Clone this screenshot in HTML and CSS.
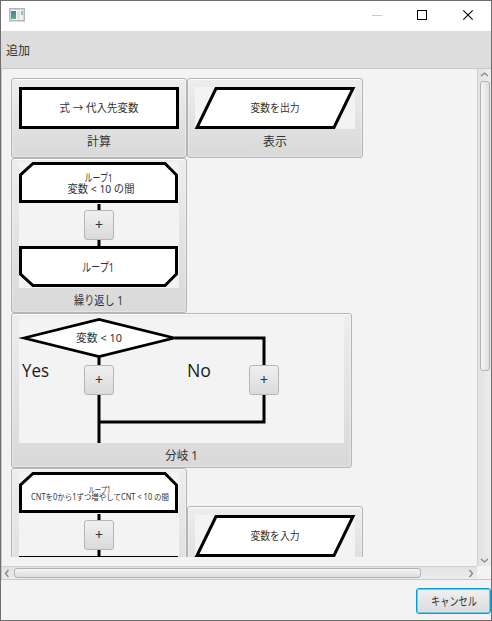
FILE: index.html
```html
<!DOCTYPE html>
<html lang="ja">
<head>
<meta charset="utf-8">
<title>追加</title>
<link rel="stylesheet" href="styles.css">
</head>
<body>
<div class="window">
  <div class="titlebar">
    <svg class="app-icon" width="16" height="14" viewBox="0 0 16 14">
      <defs><linearGradient id="pane" x1="0" y1="0" x2="0" y2="1"><stop offset="0" stop-color="#4b7fa5"/><stop offset="1" stop-color="#55ae7c"/></linearGradient></defs>
      <rect x=".75" y=".75" width="14.5" height="12" fill="#f3f4f5" stroke="#b2b5b9" stroke-width="1.5"/>
      <path d="M1 1.5H15" stroke="#c9d1d8"/>
      <rect x="2" y="3" width="5" height="8" fill="url(#pane)"/>
      <rect x="8" y="3" width="3" height="8" fill="#dfe2e5"/>
      <rect x="12" y="3" width="2" height="4" fill="#91c4b4"/>
    </svg>
    <svg class="controls" width="102" height="12" viewBox="0 0 102 12">
      <path d="M0 6.5H10" stroke="#ccc"/>
      <rect x="45.5" y="1.5" width="9" height="9" fill="none" stroke="#000"/>
      <path d="M91.3 1.3L100.7 10.7M100.7 1.3L91.3 10.7" stroke="#000" stroke-width="1.1"/>
    </svg>
  </div>
  <div class="header">追加</div>
  <div class="scroll-pane">
    <div class="viewport">
      <div class="row">
        <div class="tile simple">
          <svg width="160" height="42">
            <rect x="1.5" y="1.5" width="157" height="39" class="shape"/>
            <text x="80" y="25" textLength="79" lengthAdjust="spacingAndGlyphs" class="t11">式 → 代入先変数</text>
          </svg>
          <div class="label">計算</div>
        </div>
        <div class="tile simple">
          <svg class="canvas" width="160" height="42">
            <path d="M21 1.5H158L139 40.5H2Z" class="shape"/>
            <text x="80" y="25" textLength="49" lengthAdjust="spacingAndGlyphs" class="t11">変数を出力</text>
          </svg>
          <div class="label">表示</div>
        </div>
      </div>
      <div class="row">
        <div class="tile block">
          <div class="diagram">
            <svg class="canvas" width="160" height="126">
              <path d="M80 42V86" class="line"/>
              <path d="M14 1.5H146L157.5 13V39.5H1.5V13Z" class="shape"/>
              <path d="M1.5 85.5H157.5V112L146 123.5H14L1.5 112Z" class="shape"/>
              <text x="79.5" y="20" textLength="28" lengthAdjust="spacingAndGlyphs" class="t11">ループ1</text>
              <text x="82" y="31" textLength="67" lengthAdjust="spacingAndGlyphs" class="t11">変数 &lt; 10 の間</text>
              <text x="79" y="110" textLength="32" lengthAdjust="spacingAndGlyphs" class="t12">ループ1</text>
            </svg>
            <span class="plus plus-left">+</span>
          </div>
          <div class="label wide"><svg width="52" height="24"><text x="25.5" y="17" textLength="49" lengthAdjust="spacingAndGlyphs" class="t12">繰り返し 1</text></svg></div>
        </div>
      </div>
      <div class="row">
        <div class="tile block">
          <div class="diagram">
            <svg class="canvas" width="325" height="126">
              <path d="M156 21H245V105H80M80 40V126" class="line"/>
              <path d="M5 21L80 2.5L155 21L80 39.5Z" class="shape diamond"/>
              <text x="80" y="25" textLength="46" lengthAdjust="spacingAndGlyphs" class="t11">変数 &lt; 10</text>
              <text x="16.5" y="60" textLength="27" lengthAdjust="spacingAndGlyphs" class="branch">Yes</text>
              <text x="180" y="60" textLength="24" lengthAdjust="spacingAndGlyphs" class="branch">No</text>
            </svg>
            <span class="plus plus-left">+</span>
            <span class="plus plus-right">+</span>
          </div>
          <div class="label wide"><svg width="36" height="24"><text x="17.5" y="17" textLength="33" lengthAdjust="spacingAndGlyphs" class="t12">分岐 1</text></svg></div>
        </div>
      </div>
      <div class="row">
        <div class="tile block">
          <div class="diagram">
            <svg class="canvas" width="160" height="126">
              <path d="M80 42V86" class="line"/>
              <path d="M14 1.5H146L157.5 13V39.5H1.5V13Z" class="shape"/>
              <path d="M1.5 85.5H157.5V112L146 123.5H14L1.5 112Z" class="shape"/>
              <text x="80.5" y="21" textLength="22" lengthAdjust="spacingAndGlyphs" class="t8">ループ1</text>
              <text x="81" y="28" textLength="138" lengthAdjust="spacingAndGlyphs" class="t8">CNTを0から1ずつ増やしてCNT &lt; 10 の間</text>
            </svg>
            <span class="plus plus-left">+</span>
          </div>
        </div>
        <div class="tile simple lowered">
          <svg class="canvas" width="160" height="42">
            <path d="M21 1.5H158L139 40.5H2Z" class="shape"/>
            <text x="80" y="25" textLength="49" lengthAdjust="spacingAndGlyphs" class="t11">変数を入力</text>
          </svg>
        </div>
      </div>
    </div>
    <div class="vbar">
      <svg width="9" height="11" viewBox="0 0 9 11"><path d="M1 7L4.5 4L8 7" class="arrow"/></svg>
      <div class="vthumb"></div>
      <svg class="end" width="9" height="11" viewBox="0 0 9 11"><path d="M1 4L4.5 7L8 4" class="arrow"/></svg>
    </div>
    <div class="hbar">
      <svg width="11" height="11" viewBox="0 0 11 11"><path d="M6.5 2L3.5 5.5L6.5 9" class="arrow"/></svg>
      <div class="hthumb"></div>
      <svg class="end" width="11" height="11" viewBox="0 0 11 11"><path d="M4.5 2L7.5 5.5L4.5 9" class="arrow"/></svg>
    </div>
    <div class="corner"></div>
  </div>
  <div class="footer">
    <div class="cancel"><svg width="56" height="24"><text x="28" y="17" textLength="46" lengthAdjust="spacingAndGlyphs" class="t12">キャンセル</text></svg></div>
  </div>
</div>
</body>
</html>
```
FILE: styles.css
```css
* { box-sizing: border-box; }
body {
  margin: 0;
  font: 12px "Noto Sans", "Noto Sans CJK JP", sans-serif;
  color: #333;
}
svg { display: block; flex: none; overflow: visible; }
.window {
  width: 492px;
  height: 621px;
  border: 1px solid #6e6e6e;
  background: #f3f3f3;
  display: flex;
  flex-direction: column;
}
.titlebar {
  height: 30px;
  flex: none;
  background: #fff;
  display: flex;
  justify-content: space-between;
  padding: 7px 17px 0 8px;
}
.controls { margin-top: 1px; }
.header {
  height: 37px;
  flex: none;
  background: #ddd;
  padding-left: 5px;
  line-height: 39px;
}
.scroll-pane {
  height: 512px;
  flex: none;
  border: 1px solid #c8c8c8;
  border-right: 0;
  display: grid;
  grid-template-columns: 475px 14px;
  grid-template-rows: 497px 13px;
}
.viewport {
  height: 488px;
  padding: 9px 0 0 9px;
  overflow: hidden;
}
.row { display: flex; }
.tile {
  display: flex;
  flex-direction: column;
  align-items: center;
  border: 1px solid #b5b5b5;
  border-radius: 3px;
  background: linear-gradient(#ededed, #d9d9d9);
  box-shadow: inset 0 1px 0 rgba(255, 255, 255, .7), inset 0 0 0 1px rgba(255, 255, 255, .3);
}
.simple { width: 176px; height: 80px; padding: 8px 7px 0; }
.block { height: 155px; padding: 3px 7px 0; }
.lowered { margin-top: 38px; }
.canvas { background: #f3f3f3; }
.diagram { position: relative; }
.label {
  height: 24px;
  padding-top: 2px;
  display: flex;
  align-items: center;
  line-height: 24px;
}
.wide { padding-top: 0; }
.shape { fill: #fff; stroke: #000; stroke-width: 3; }
.diamond { stroke-width: 2.8; stroke-miterlimit: 10; }
.line { fill: none; stroke: #000; stroke-width: 3; }
text { text-anchor: middle; fill: #333; }
.t11 { font-size: 11px; }
.t12 { font-size: 12px; }
.t8 { font-size: 8px; }
.branch { font-family: "Open Sans", sans-serif; font-size: 18px; fill: #1a1a1a; }
.plus {
  position: absolute;
  top: 48px;
  width: 30px;
  height: 30px;
  border: 1px solid #b5b5b5;
  border-radius: 3px;
  background: linear-gradient(#f0f0f0, #dadada);
  font-size: 14px;
  line-height: 28px;
  text-align: center;
}
.plus-left { left: 65px; }
.plus-right { left: 230px; }
.vbar {
  border-left: 1px solid #d0d0d0;
  background: linear-gradient(90deg, #e2e2e2, #ececec);
  display: flex;
  flex-direction: column;
  align-items: center;
}
.vthumb {
  width: 10px;
  height: 290px;
  margin-top: 1px;
  border: 1px solid #b3b3b3;
  border-radius: 3px;
  background: linear-gradient(90deg, #f5f5f5, #dedede);
}
.end { margin-top: auto; }
.hbar {
  border-top: 1px solid #d0d0d0;
  background: linear-gradient(#e2e2e2, #ececec);
  display: flex;
  align-items: center;
}
.hthumb {
  width: 407px;
  height: 10px;
  border: 1px solid #b3b3b3;
  border-radius: 3px;
  background: linear-gradient(#f5f5f5, #dedede);
  margin-left: 1px;
}
.hbar .end { margin: 0 1px 0 auto; }
.arrow { fill: none; stroke: #858585; stroke-width: 1.3; }
.corner { background: #f3f3f3; }
.footer {
  flex: 1;
  display: flex;
  justify-content: flex-end;
  padding-top: 8px;
}
.cancel {
  width: 75px;
  height: 26px;
  border: 1px solid #039ed3;
  border-radius: 3px;
  box-shadow: inset 0 0 0 1px #70c9e8;
  background: linear-gradient(#f0f0f0, #dcdcdc);
  display: flex;
  align-items: center;
  justify-content: center;
}
```
